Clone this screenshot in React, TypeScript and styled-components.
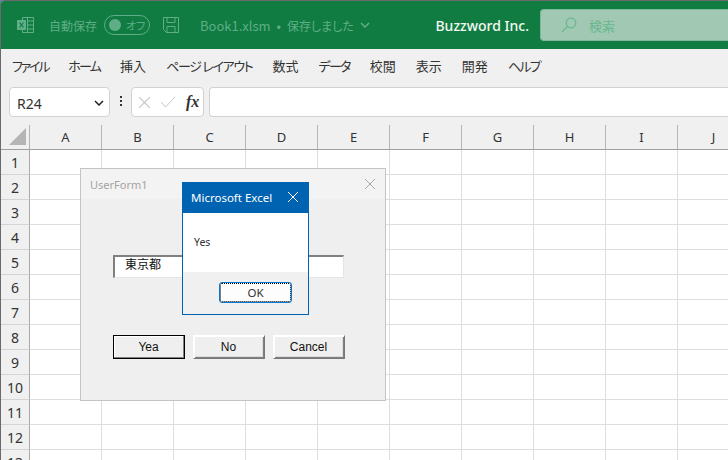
import React from 'react';
import styled, { createGlobalStyle } from 'styled-components';

const UI_FONT = '"Noto Sans", "Noto Sans CJK JP", sans-serif';
const JP_FONT = '"Noto Sans CJK JP", "Noto Sans", sans-serif';
const LEGACY_FONT = '"Liberation Sans", "Noto Sans CJK JP", sans-serif';
const GREEN = '#107c41';
const DIM = '#5fae88';

const COLUMNS = ['A', 'B', 'C', 'D', 'E', 'F', 'G', 'H', 'I', 'J'];
const ROWS = [1, 2, 3, 4, 5, 6, 7, 8, 9, 10, 11, 12, 13];
const MENU = [
  { label: 'ファイル', tracking: -2.2 },
  { label: 'ホーム', tracking: -1.8 },
  { label: '挿入', tracking: 0 },
  { label: 'ページ レイアウト', tracking: -1.3 },
  { label: '数式', tracking: 0 },
  { label: 'データ', tracking: -1.7 },
  { label: '校閲', tracking: 0 },
  { label: '表示', tracking: 0 },
  { label: '開発', tracking: 0 },
  { label: 'ヘルプ', tracking: -1.7 },
];

const GlobalStyle = createGlobalStyle`
  html, body {
    margin: 0;
    padding: 0;
    background: #4a90c8;
    overflow: hidden;
  }
  * {
    box-sizing: border-box;
  }
`;

const Frame = styled.div`
  position: relative;
  width: 728px;
  height: 460px;
  overflow: hidden;
  display: flex;
  flex-direction: column;
  background: #f0f0f0;
  border-top: 1px solid #6b6b6b;
  border-left: 1px solid #6b6b6b;
  border-top-left-radius: 4px;
  font-family: ${UI_FONT};
`;

const TitleBar = styled.div`
  height: 48px;
  flex: none;
  display: flex;
  align-items: center;
  padding-left: 16px;
  background: ${GREEN};
  color: ${DIM};
`;

const AutoSave = styled.span`
  margin-left: 15px;
  font: 12px ${JP_FONT};
`;

const Toggle = styled.span`
  margin-left: 7px;
  width: 46px;
  height: 20px;
  display: flex;
  align-items: center;
  gap: 5px;
  padding-left: 4px;
  border: 1px solid ${DIM};
  border-radius: 10px;
  font: 11px ${JP_FONT};
  font-feature-settings: 'palt';
  white-space: nowrap;
`;

const Knob = styled.span`
  width: 12px;
  height: 12px;
  flex: none;
  border-radius: 50%;
  background: ${DIM};
`;

const SaveIcon = styled.svg`
  margin-left: 13px;
`;

const FileName = styled.span`
  margin-left: 21px;
  display: flex;
  align-items: center;
  gap: 6px;
  font: 13px ${JP_FONT};
  white-space: nowrap;
`;

const SavedState = styled.span`
  font-size: 12px;
  font-feature-settings: 'palt';
`;

const Company = styled.span`
  margin-left: auto;
  color: #f4f8f5;
  font-size: 14px;
  font-weight: 500;
  white-space: nowrap;
`;

const SearchBox = styled.div`
  margin-left: 11px;
  width: 188px;
  height: 32px;
  display: flex;
  align-items: center;
  gap: 12px;
  padding-left: 20px;
  background: #a0c8b3;
  border: 1px solid #7fb798;
  border-right: none;
  border-radius: 4px 0 0 4px;
  color: #68b88e;
  font: 13px ${JP_FONT};
`;

const MenuBar = styled.div`
  height: 38px;
  flex: none;
  display: flex;
  align-items: center;
  padding: 0 0 6px 11px;
  gap: 20px;
  background: #f0f0f0;
`;

const MenuItem = styled.span<{ $tracking: number }>`
  color: #333;
  font: 13px ${JP_FONT};
  font-feature-settings: 'palt';
  letter-spacing: ${(p) => p.$tracking}px;
  white-space: nowrap;
`;

const FormulaBar = styled.div`
  height: 38px;
  flex: none;
  display: flex;
  align-items: flex-start;
  padding-left: 8px;
  background: #f0f0f0;
`;

const NameBox = styled.div`
  width: 101px;
  height: 30px;
  display: flex;
  align-items: center;
  justify-content: space-between;
  padding: 2px 5px 0 7px;
  background: #fff;
  border: 1px solid #d2d2d2;
  border-radius: 4px;
  color: #333;
  font-size: 14px;
`;

const Grip = styled.span`
  width: 22px;
  height: 30px;
  display: flex;
  flex-direction: column;
  align-items: center;
  justify-content: center;
  gap: 2px;
  padding-bottom: 3px;
  i {
    width: 2px;
    height: 2px;
    background: #333;
  }
`;

const FormulaTools = styled.div`
  width: 73px;
  height: 30px;
  margin-left: -1px;
  display: flex;
  align-items: center;
  gap: 9px;
  padding-left: 6px;
  background: #fff;
  border: 1px solid #d2d2d2;
  border-radius: 4px;
`;

const Fx = styled.span`
  margin-left: 1px;
  color: #333;
  font: italic bold 16px "Liberation Serif", serif;
`;

const FormulaInput = styled.div`
  flex: 1;
  height: 30px;
  margin-left: 5px;
  background: #fff;
  border: 1px solid #d2d2d2;
  border-right: none;
  border-radius: 4px 0 0 4px;
`;

const Sheet = styled.div`
  display: grid;
  grid-template-columns: 29px repeat(10, 72px);
  grid-auto-rows: 25px;
  background: #fff;
`;

const Corner = styled.div`
  display: flex;
  align-items: flex-end;
  justify-content: flex-end;
  padding: 0 3px 4px 0;
  background: #f0f0f0;
  border-bottom: 1px solid #9f9f9f;
  border-right: 1px solid #b4b4b4;
`;

const ColumnHead = styled.div`
  display: flex;
  align-items: center;
  justify-content: center;
  background: #f0f0f0;
  border-bottom: 1px solid #9f9f9f;
  border-right: 1px solid #b4b4b4;
  color: #333;
  font-size: 13px;
`;

const RowHead = styled.div`
  display: flex;
  align-items: center;
  justify-content: center;
  background: #f0f0f0;
  border-bottom: 1px solid #d4d4d4;
  border-right: 1px solid #a8a8a8;
  color: #333;
  font-size: 14px;
`;

const Cell = styled.div`
  border-right: 1px solid #dedede;
  border-bottom: 1px solid #dedede;
`;

const UserForm = styled.div`
  position: absolute;
  left: 79px;
  top: 167px;
  width: 306px;
  height: 233px;
  display: flex;
  flex-direction: column;
  background: #efefef;
  border: 1px solid #c4c4c4;
`;

const FormTitle = styled.div`
  height: 30px;
  flex: none;
  display: flex;
  align-items: center;
  justify-content: space-between;
  padding: 0 9px;
  background: #f3f3f3;
  color: #a3a3a3;
  font-size: 11px;
`;

const FormBody = styled.div`
  display: flex;
  flex-direction: column;
  padding: 56px 0 0 32px;
`;

const TextField = styled.div`
  width: 231px;
  height: 23px;
  padding: 0 0 0 10px;
  background: #fff;
  border-top: 2px solid #808080;
  border-left: 2px solid #808080;
  border-right: 1px solid #e4e4e4;
  border-bottom: 1px solid #e4e4e4;
  color: #111;
  font: 12px ${JP_FONT};
  line-height: 13px;
`;

const ButtonRow = styled.div`
  margin-top: 57px;
  display: flex;
  gap: 8px;
`;

const LegacyButton = styled.button<{ $isDefault?: boolean }>`
  width: 72px;
  height: 24px;
  padding: 0 1px 0 0;
  background: #efefef;
  border: 1px solid ${(p) => (p.$isDefault ? '#000' : '#efefef')};
  box-shadow: ${(p) =>
    p.$isDefault
      ? 'inset -1px -1px 0 #808080, inset 1px 1px 0 #fff'
      : '1px 1px 0 #fff inset, -1px -1px 0 #808080 inset, -2px -2px 0 #dcdcdc inset'};
  border-top-color: ${(p) => (p.$isDefault ? '#000' : '#fff')};
  border-left-color: ${(p) => (p.$isDefault ? '#000' : '#fff')};
  border-right-color: ${(p) => (p.$isDefault ? '#000' : '#777')};
  border-bottom-color: ${(p) => (p.$isDefault ? '#000' : '#777')};
  color: #111;
  font: 12px ${LEGACY_FONT};
`;

const MessageBox = styled.div`
  position: absolute;
  left: 181px;
  top: 181px;
  width: 127px;
  height: 133px;
  display: flex;
  flex-direction: column;
  background: #f0f0f0;
  border: 1px solid #0063b1;
`;

const MessageTitle = styled.div`
  height: 30px;
  flex: none;
  display: flex;
  align-items: center;
  justify-content: space-between;
  padding: 0 9px 2px 8px;
  background: #0063b1;
  color: #fff;
  font-size: 11.5px;
`;

const MessageBody = styled.div`
  height: 59px;
  flex: none;
  padding: 22px 0 0 11px;
  background: #fff;
  color: #333;
  font-size: 10.5px;
`;

const MessageFooter = styled.div`
  flex: 1;
  display: flex;
  justify-content: flex-end;
  padding: 10px 16px 0 0;
`;

const OkButton = styled.button`
  width: 73px;
  height: 21px;
  padding: 0;
  background: #fdfdfd;
  border: 1px solid #0078d4;
  border-radius: 3px;
  outline: 1px dotted #000;
  outline-offset: -2px;
  color: #333;
  font: 11.5px ${UI_FONT};
`;

const CloseIcon = ({ color, size }: { color: string; size: number }) => (
  <svg width={size} height={size} viewBox="0 0 12 12" fill="none" stroke={color} strokeWidth="1">
    <path d="M1 1l10 10M11 1L1 11" />
  </svg>
);

const ExcelIcon = () => (
  <svg width="17" height="16" viewBox="0 0 17 16" fill="none" stroke={DIM} strokeWidth="1">
    <path d="M5.5 .5h11v15h-11zM10.5 .5v15M10.5 4h6M10.5 8h6M10.5 12h6" />
    <rect x="0" y="3" width="9" height="10" fill={DIM} stroke="none" />
    <path d="M2.5 5.5l4 5M6.5 5.5l-4 5" stroke={GREEN} strokeWidth="1.2" />
  </svg>
);

const FloppyIcon = () => (
  <SaveIcon width="16" height="16" viewBox="0 0 16 16" fill="none" stroke={DIM} strokeWidth="1">
    <path d="M.5 .5h15v15h-12l-3-3zM4 .5v5h8v-5M4 15.5v-6h8v6" />
  </SaveIcon>
);

const SearchIcon = () => (
  <svg width="16" height="16" viewBox="0 0 16 16" fill="none" stroke="#68b88e" strokeWidth="1.2">
    <circle cx="10" cy="6" r="4.8" />
    <path d="M6.5 9.5L1 15" />
  </svg>
);

const ChevronIcon = ({ color = '#222' }: { color?: string }) => (
  <svg width="10" height="6" viewBox="0 0 10 6" fill="none" stroke={color} strokeWidth="1.5">
    <path d="M1 1l4 4 4-4" />
  </svg>
);

const CheckIcon = () => (
  <svg width="16" height="12" viewBox="0 0 16 12" fill="none" stroke="#c4c4c4" strokeWidth="1">
    <path d="M1 6l4.5 5L15 1" />
  </svg>
);

export default function App() {
  return (
    <Frame>
      <GlobalStyle />
      <TitleBar>
        <ExcelIcon />
        <AutoSave>自動保存</AutoSave>
        <Toggle>
          <Knob />
          オフ
        </Toggle>
        <FloppyIcon />
        <FileName>
          <span>Book1.xlsm</span>
          <span>•</span>
          <SavedState>保存しました</SavedState>
          <ChevronIcon color={DIM} />
        </FileName>
        <Company>Buzzword Inc.</Company>
        <SearchBox>
          <SearchIcon />
          検索
        </SearchBox>
      </TitleBar>

      <MenuBar>
        {MENU.map((item) => (
          <MenuItem key={item.label} $tracking={item.tracking}>
            {item.label}
          </MenuItem>
        ))}
      </MenuBar>

      <FormulaBar>
        <NameBox>
          R24
          <ChevronIcon />
        </NameBox>
        <Grip>
          <i />
          <i />
          <i />
        </Grip>
        <FormulaTools>
          <CloseIcon color="#c4c4c4" size={13} />
          <CheckIcon />
          <Fx>fx</Fx>
        </FormulaTools>
        <FormulaInput />
      </FormulaBar>

      <Sheet>
        <Corner>
          <svg width="17" height="17" viewBox="0 0 17 17">
            <path d="M17 0v17H0z" fill="#b5b5b5" />
          </svg>
        </Corner>
        {COLUMNS.map((col) => (
          <ColumnHead key={col}>{col}</ColumnHead>
        ))}
        {ROWS.map((row) => (
          <React.Fragment key={row}>
            <RowHead>{row}</RowHead>
            {COLUMNS.map((col) => (
              <Cell key={col} />
            ))}
          </React.Fragment>
        ))}
      </Sheet>

      <UserForm>
        <FormTitle>
          UserForm1
          <CloseIcon color="#a8a8a8" size={12} />
        </FormTitle>
        <FormBody>
          <TextField>東京都</TextField>
          <ButtonRow>
            <LegacyButton $isDefault>Yea</LegacyButton>
            <LegacyButton>No</LegacyButton>
            <LegacyButton>Cancel</LegacyButton>
          </ButtonRow>
        </FormBody>
      </UserForm>

      <MessageBox>
        <MessageTitle>
          Microsoft Excel
          <CloseIcon color="#fff" size={12} />
        </MessageTitle>
        <MessageBody>Yes</MessageBody>
        <MessageFooter>
          <OkButton>OK</OkButton>
        </MessageFooter>
      </MessageBox>
    </Frame>
  );
}
